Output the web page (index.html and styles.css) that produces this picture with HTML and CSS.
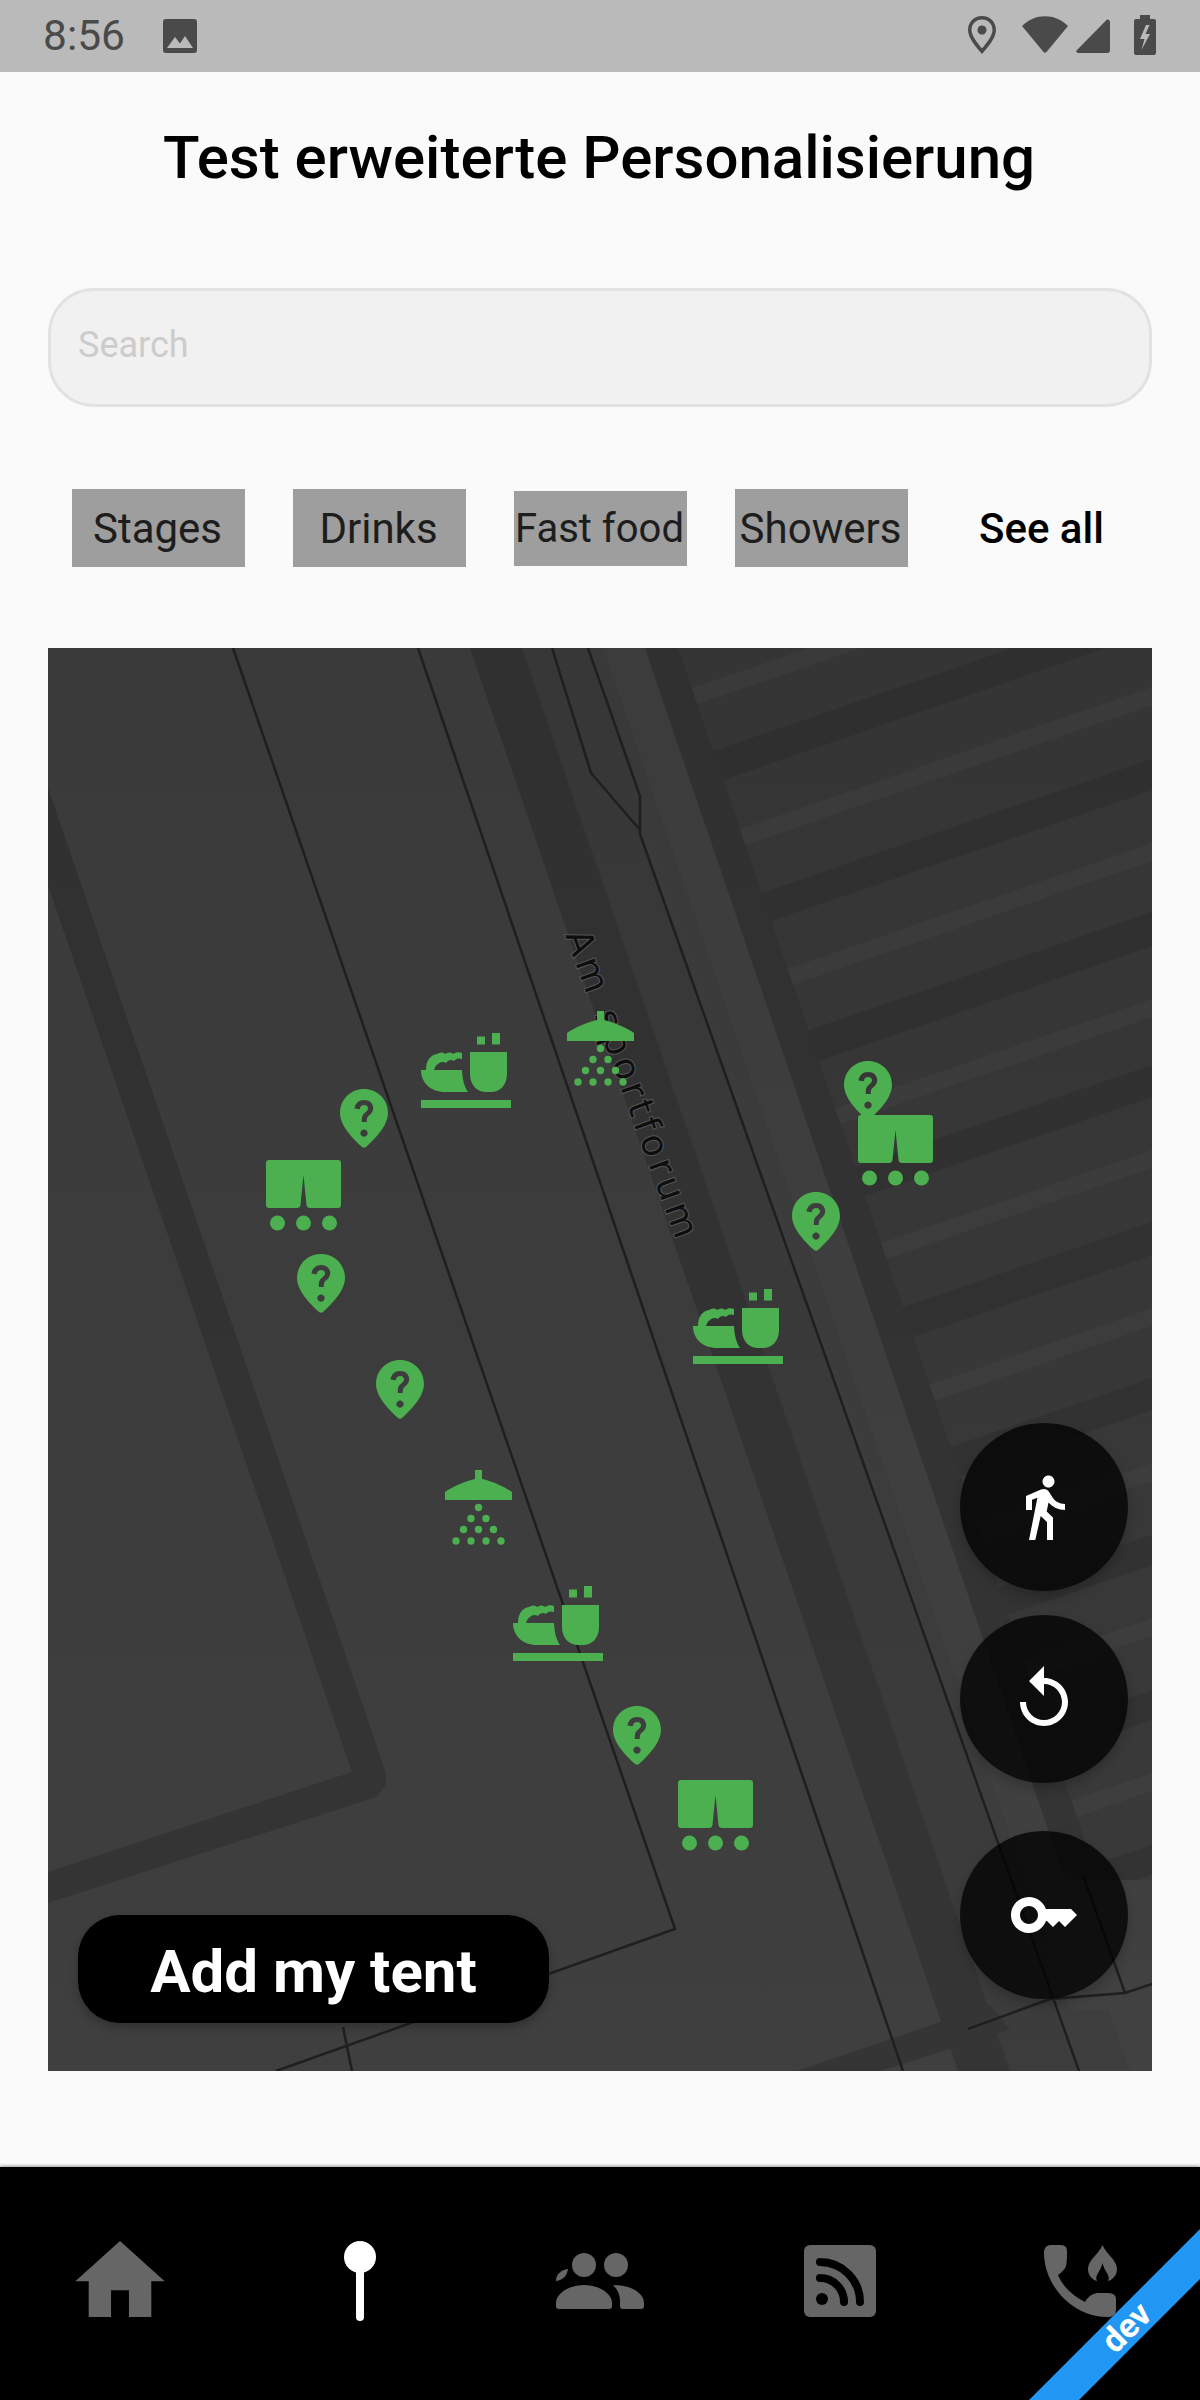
FILE: index.html
```html
<!DOCTYPE html>
<html lang="de">
<head>
<meta charset="utf-8">
<title>Test erweiterte Personalisierung</title>
<link rel="stylesheet" href="styles.css">
</head>
<body>
<svg class="defs" width="0" height="0" aria-hidden="true">
  <defs>
    <linearGradient id="fade" x1="0" y1="0" x2="0" y2="1">
      <stop offset="0" stop-color="#fff" stop-opacity="0"/>
      <stop offset="1" stop-color="#fff" stop-opacity=".025"/>
    </linearGradient>
    <symbol id="pin" viewBox="0 0 48 59">
      <path fill="#4caf50" fill-rule="evenodd" d="M24 0C37 0 48 10 48 24C48 36 36 49 26 58Q24 59.500 22 58C12 49 0 36 0 24C0 10 11 0 24 0ZM24 40.500a3.600 3.600 0 1 0 .01 0ZM14.500 19.500l5.200 0.800C20 17.500 21.800 16 24.200 16C26.500 16 28 17.400 28 19.300C28 21 27 22 25.500 23.200C23 25.200 21.800 27 21.800 30.500V33h5v-2C26.800 28.500 28 27.400 29.500 26.100C31.600 24.300 33.200 22.500 33.200 19.100C33.200 14.500 29.500 11 24.100 11C19 11 15.200 14.400 14.500 19.500Z"/>
    </symbol>
    <symbol id="shorts" viewBox="0 0 75 71">
      <path fill="#4caf50" d="M3 0H72Q75 0 75 3V45Q75 48 72 48H44Q41 48 40.500 45L37.500 15L34.500 45Q34 48 31 48H3Q0 48 0 45V3Q0 0 3 0Z"/>
      <circle cx="11.500" cy="63" r="7.500" fill="#4caf50"/>
      <circle cx="37.500" cy="63" r="7.500" fill="#4caf50"/>
      <circle cx="63.500" cy="63" r="7.500" fill="#4caf50"/>
    </symbol>
    <symbol id="bowl" viewBox="0 0 90 75">
      <g fill="#4caf50">
        <path d="M56 3.500H64V11.500H56ZM71 0H79V11.500H71Z"/>
        <path d="M49 19H86V41C86 52 79 59 70 59H65C56 59 49 52 49 41Z"/>
        <path d="M0 67H90V75H0Z"/>
        <path d="M0 37H41C41.500 46 43 53 47 59H24C10 59 0 50 0 37Z"/>
        <path d="M5 37C5 28 9 22 16 21C19 19 22 19 24 21C27 19 30 19 32 21C35 19 38 19 41 20V26C38 25 35 25 33 28C30 26 27 27 25 30C22 28 19 29 17 31C15 32 14 34 13 37Z"/>
      </g>
    </symbol>
    <symbol id="shower" viewBox="0 0 67 75">
      <path fill="#4caf50" d="M30 0H37V9C47 11 60 17 67 22V30H0V22C7 17 20 11 30 9Z"/>
      <g fill="#4caf50">
        <circle cx="33.500" cy="37.500" r="3.700"/>
        <circle cx="26" cy="48.500" r="3.700"/>
        <circle cx="41" cy="48.500" r="3.700"/>
        <circle cx="18.500" cy="59.500" r="3.700"/>
        <circle cx="33.500" cy="59.500" r="3.700"/>
        <circle cx="48.500" cy="59.500" r="3.700"/>
        <circle cx="11" cy="71" r="3.700"/>
        <circle cx="26" cy="71" r="3.700"/>
        <circle cx="41" cy="71" r="3.700"/>
        <circle cx="56" cy="71" r="3.700"/>
      </g>
    </symbol>
  </defs>
</svg>

<div class="screen">
  <header class="status">
    <div class="status-left">
      <span class="clock">8:56</span>
      <svg class="st-img" viewBox="0 0 34 34" aria-hidden="true"><path fill="#4a4a4a" d="M3 0H31Q34 0 34 3V31Q34 34 31 34H3Q0 34 0 31V3Q0 0 3 0Z"/><path fill="#bababa" d="M4 29L12 18L17 24.500L22 17L30 29Z"/></svg>
    </div>
    <div class="status-right">
      <svg class="st-loc" viewBox="0 0 28 38" aria-hidden="true"><path fill="#4a4a4a" fill-rule="evenodd" d="M14 0C22 0 28 6 28 14C28 22 20 31 14 38C8 31 0 22 0 14C0 6 6 0 14 0ZM14 3.500C8 3.500 3.500 8 3.500 14C3.500 19.500 9 26.500 14 32.500C19 26.500 24.500 19.500 24.500 14C24.500 8 20 3.500 14 3.500ZM14 9.500a4.500 4.500 0 1 1 -.01 0Z"/></svg>
      <svg class="st-wifi" viewBox="0 0 46 37" aria-hidden="true"><path fill="#4a4a4a" d="M0 10C13 -3 33 -3 46 10L24.500 36Q23 37.500 21.500 36Z"/></svg>
      <svg class="st-signal" viewBox="0 0 34 34" aria-hidden="true"><path fill="#4a4a4a" d="M31 0.500Q34 0 34 3V31Q34 34 31 34H2Q-1 33 1 31Z"/></svg>
      <svg class="st-batt" viewBox="0 0 22 40" aria-hidden="true"><path fill="#4a4a4a" d="M6 0H16V4H20Q22 4 22 6V38Q22 40 20 40H2Q0 40 0 38V6Q0 4 2 4H6Z"/><path fill="#bababa" d="M12 10L6 24H10.500L7.500 35L16 19H11.500L15.500 10Z"/></svg>
    </div>
  </header>

  <main class="content">
    <h1 class="title">Test erweiterte Personalisierung</h1>
    <div class="search"><span class="placeholder">Search</span></div>
    <nav class="filters">
      <span class="chip">Stages</span>
      <span class="chip">Drinks</span>
      <span class="chip chip-fit">Fast food</span>
      <span class="chip">Showers</span>
      <span class="see-all">See all</span>
    </nav>

    <section class="map">
      <svg class="map-canvas" viewBox="48 648 1104 1423" aria-label="Karte">
        <rect x="48" y="648" width="1104" height="1423" fill="#3a3a3a"/>
        <polygon fill="#373737" points="522,648 588,648 640,796 640,834 1079,2071 1010,2071"/>
        <polygon fill="#353535" points="645,648 1152,648 1152,2071 1130,2071"/>
        <polygon fill="#393939" points="588,648 645,648 1130,2071 1079,2071"/>
        <polygon fill="#3c3c3c" points="603,648 645,648 1110,2010 1070,2010"/>
        <polygon fill="#303030" points="470,648 522,648 1010,2071 958,2071"/>
        <polygon fill="#3a3a3a" points="692,688 1152,530 1152,548 692,706"/>
        <polygon fill="#3a3a3a" points="740,829 1152,687 1152,705 740,847"/>
        <polygon fill="#3a3a3a" points="787,969 1152,843 1152,861 787,987"/>
        <polygon fill="#3a3a3a" points="835,1108 1152,999 1152,1017 835,1126"/>
        <polygon fill="#3a3a3a" points="881,1243 1152,1150 1152,1168 881,1261"/>
        <polygon fill="#3a3a3a" points="929,1385 1152,1308 1152,1326 929,1403"/>
        <polygon fill="#3a3a3a" points="976,1524 1152,1463 1152,1481 976,1542"/>
        <polygon fill="#3a3a3a" points="1024,1662 1152,1618 1152,1636 1024,1680"/>
        <polygon fill="#3a3a3a" points="1071,1801 1152,1773 1152,1791 1071,1819"/>
        <polygon fill="#2f2f2f" points="708,753 1152,600 1152,632 708,785"/>
        <polygon fill="#2f2f2f" points="756,895 1152,759 1152,790 756,926"/>
        <polygon fill="#2f2f2f" points="804,1032 1152,912 1152,946 804,1066"/>
        <polygon fill="#2f2f2f" points="850,1169 1152,1065 1152,1097 850,1201"/>
        <polygon fill="#2f2f2f" points="898,1309 1152,1222 1152,1255 898,1342"/>
        <polygon fill="#2f2f2f" points="945,1449 1152,1378 1152,1410 945,1481"/>
        <polygon fill="#2f2f2f" points="993,1590 1152,1535 1152,1565 993,1620"/>
        <polygon fill="#2f2f2f" points="1040,1729 1152,1690 1152,1720 1040,1759"/>
        <polygon fill="#2f2f2f" points="1087,1867 1152,1845 1152,1875 1087,1897"/>
        <polygon fill="#303030" points="645,648 678,648 1095,1870 1062,1870"/>
        <polygon fill="#3c3c3c" points="1062,1880 1152,1880 1152,2071 1130,2071"/>
        <polygon fill="#303030" points="48,788 386,1773 386,1785 376,1797 48,1903 48,1872 352,1772 48,885"/>
        <polygon fill="#303030" points="797,2071 990,2005 1010,2030 880,2071"/>
        <rect x="48" y="648" width="1104" height="1423" fill="url(#fade)"/>
        <g fill="none" stroke="#1f1f1f" stroke-width="2.500">
          <path d="M233 648L675 1929L276 2071"/>
          <path d="M343 2027L352 2071"/>
          <path d="M418 648L903 2071"/>
          <path d="M552 648L591 773L640 830"/>
          <path d="M588 648L640 796V834L1079 2071"/>
          <path d="M968 2029L1050 1999L1125 1993L1152 1984"/>
          <path d="M1083 1875L1125 1993"/>
        </g>
        <text class="street" transform="translate(565 935) rotate(70)">Am sportforum</text>
        <use href="#pin" x="340" y="1089" width="48" height="59"/>
        <use href="#pin" x="297" y="1254" width="48" height="59"/>
        <use href="#pin" x="376" y="1360" width="48" height="59"/>
        <use href="#pin" x="844" y="1061" width="48" height="59"/>
        <use href="#pin" x="792" y="1192" width="48" height="59"/>
        <use href="#pin" x="613" y="1706" width="48" height="59"/>
        <use href="#shorts" x="266" y="1160" width="75" height="71"/>
        <use href="#shorts" x="858" y="1115" width="75" height="71"/>
        <use href="#shorts" x="678" y="1780" width="75" height="71"/>
        <use href="#bowl" x="421" y="1033" width="90" height="75"/>
        <use href="#bowl" x="693" y="1289" width="90" height="75"/>
        <use href="#bowl" x="513" y="1586" width="90" height="75"/>
        <use href="#shower" x="567" y="1011" width="67" height="75"/>
        <use href="#shower" x="445" y="1470" width="67" height="75"/>
      </svg>

      <div class="fab fab-walk"><svg viewBox="0 0 24 24" aria-hidden="true"><path fill="#fff" d="M13.500 5.500c1.100 0 2-.9 2-2s-.9-2-2-2-2 .9-2 2 .9 2 2 2zM9.800 8.900L7 23h2.100l1.800-8 2.100 2v6h2v-7.500l-2.100-2 .6-3C14.800 12 16.800 13 19 13v-2c-1.900 0-3.500-1-4.300-2.400l-1-1.600c-.4-.6-1-1-1.700-1-.3 0-.5.100-.8.100L6 8.300V13h2V9.600l1.800-.7"/></svg></div>
      <div class="fab fab-undo"><svg viewBox="0 0 24 24" aria-hidden="true"><path fill="#fff" d="M12 5V1L7 6l5 5V7c3.300 0 6 2.700 6 6s-2.700 6-6 6-6-2.700-6-6H4c0 4.400 3.600 8 8 8s8-3.600 8-8-3.600-8-8-8z"/></svg></div>
      <div class="fab fab-key"><svg viewBox="0 0 24 24" aria-hidden="true"><path fill="#fff" d="M21 10h-8.350C11.830 7.670 9.610 6 7 6c-3.310 0-6 2.690-6 6s2.690 6 6 6c2.610 0 4.830-1.670 5.650-4H13l2 2 2-2 2 2 4-4.040L21 10zM7 15c-1.650 0-3-1.350-3-3s1.350-3 3-3 3 1.350 3 3-1.350 3-3 3z"/></svg></div>
      <div class="add-tent">Add my tent</div>
    </section>
  </main>

  <footer class="tabbar">
    <svg class="tab tab-home" viewBox="2 3 20 17" aria-hidden="true"><path fill="#666" d="M10 20v-6h4v6h5v-8h3L12 3 2 12h3v8z"/></svg>
    <svg class="tab tab-pin" viewBox="0 0 32 80" aria-hidden="true"><circle cx="16" cy="16" r="16" fill="#fff"/><rect x="12" y="20" width="8" height="60" rx="4" fill="#fff"/></svg>
    <svg class="tab tab-people" viewBox="0 0 88 56" aria-hidden="true">
      <g fill="#666">
        <circle cx="28" cy="12" r="12"/>
        <circle cx="60" cy="12" r="12"/>
        <path d="M12 16C11 22 8 27 0 28C0 22 4 17 12 16Z"/>
        <path d="M0 50C0 40 14 32 28 32C42 32 56 40 56 50V53Q56 56 53 56H3Q0 56 0 53Z"/>
        <path d="M57 32C75 32 88 40 88 50V53Q88 56 85 56H67Q64 56 64 53V48C64 42 62 37 57 32Z"/>
      </g>
    </svg>
    <svg class="tab tab-rss" viewBox="0 0 72 72" aria-hidden="true">
      <rect width="72" height="72" rx="6" fill="#666"/>
      <g fill="none" stroke="#000" stroke-width="8" stroke-linecap="round"><path d="M16 33A24 24 0 0 1 40 57"/><path d="M16 17A40 40 0 0 1 56 57"/></g>
      <circle cx="18" cy="54" r="6" fill="#000"/>
    </svg>
    <svg class="tab tab-phone" viewBox="0 0 76 72" aria-hidden="true">
      <path fill="#666" d="M7 0H17Q23 0 23 6C23 12 23 17 22 21Q21 25 14 30C19 42 29 51 41 57C45 50 50 48 55 48H64Q72 48 72 54V64Q72 72 64 72C28 72 0 40 0 8Q0 0 7 0Z"/>
      <path fill="#666" d="M58.500 0C62 9 73 15 73 24C73 31 68 35 64 36C65.500 33 64.500 31 63 28C61 25 59.500 22 58.500 18C57.500 22 56 25 54 28C52.500 31 51.500 33 53 36C49 35 44 31 44 24C44 15 55 9 58.500 0Z"/>
    </svg>
  </footer>

  <svg class="ribbon" viewBox="0 0 171 171" aria-hidden="true">
    <polygon fill="#2196f3" points="171,0 0,171 50,171 171,50"/>
    <text class="ribbon-text" transform="translate(97 98) rotate(-45)" text-anchor="middle" y="12">dev</text>
  </svg>
</div>
</body>
</html>
```
FILE: styles.css
```css
* { box-sizing: border-box; }
html, body { margin: 0; padding: 0; }
body { width: 1200px; height: 2400px; background: #fafafa; font-family: Roboto, "Liberation Sans", sans-serif; overflow: hidden; }
.defs { position: absolute; }
.screen { position: relative; width: 1200px; height: 2400px; display: flex; flex-direction: column; }

.status { height: 72px; flex: none; background: #bababa; display: flex; align-items: center; justify-content: space-between; padding: 0 44px 0 43px; }
.status-left { display: flex; align-items: center; gap: 38px; }
.clock { font-size: 42.500px; color: #4a4a4a; line-height: 1; }
.st-img { width: 34px; height: 34px; }
.status-right { display: flex; align-items: center; margin-bottom: 3px; }
.st-loc { width: 28px; height: 38px; margin-right: 26px; }
.st-wifi { width: 46px; height: 37px; margin-right: 8px; }
.st-signal { width: 34px; height: 34px; margin-right: 24px; margin-top: 3px; }
.st-batt { width: 22px; height: 40px; }

.content { flex: 1; padding: 0 48px; display: flex; flex-direction: column; }
.title { margin: 48px 0 0; padding-right: 2px; height: 76px; font-size: 60px; line-height: 76px; font-weight: 500; color: #000; text-align: center; white-space: nowrap; }
.search { margin: 92px 0 0; height: 119px; border: 3px solid #e2e2e2; border-radius: 46px; background: #f1f1f1; display: flex; align-items: center; padding: 0 0 5px 27px; }
.placeholder { font-size: 36px; color: #ccc; }
.filters { margin-top: 82px; height: 78px; display: flex; align-items: center; padding-left: 24px; }
.chip { width: 173px; height: 78px; margin-right: 48px; padding-right: 2px; background: #9e9e9e; color: #1d1d1d; font-size: 42px; display: flex; align-items: center; justify-content: center; white-space: nowrap; flex: none; }
.chip-fit { height: 75px; padding-right: 2px; font-size: 40px; }
.see-all { margin-left: 23px; font-size: 42px; font-weight: 500; color: #000; white-space: nowrap; }

.map { position: relative; margin-top: 81px; width: 1104px; height: 1423px; overflow: hidden; background: #3c3c3c; }
.map-canvas { display: block; width: 1104px; height: 1423px; }
.street { font-family: "DejaVu Sans", sans-serif; font-size: 36px; letter-spacing: 4.500px; fill: #0e0e0e; stroke: #565656; stroke-width: 2px; paint-order: stroke; }

.fab { position: absolute; left: 912px; width: 168px; height: 168px; border-radius: 50%; background: rgba(0,0,0,.76); box-shadow: 0 6px 12px rgba(0,0,0,.2); display: flex; align-items: center; justify-content: center; }
.fab svg { width: 72px; height: 72px; }
.fab-walk { top: 775px; }
.fab-undo { top: 967px; }
.fab-key { top: 1183px; }
.add-tent { position: absolute; left: 30px; top: 1267px; width: 471px; height: 108px; padding-top: 5px; border-radius: 42px; background: #000; color: #fff; font-size: 60px; font-weight: 700; display: flex; align-items: center; justify-content: center; box-shadow: 0 4px 10px rgba(0,0,0,.25); white-space: nowrap; }

.tabbar { position: relative; height: 233px; flex: none; background: #000; box-shadow: 0 -1px 3px rgba(0,0,0,.4); display: block; }
.tab { position: absolute; display: block; }
.tab-home { left: 75px; top: 74px; width: 90px; height: 76px; }
.tab-pin { left: 344px; top: 74px; width: 32px; height: 80px; }
.tab-people { left: 556px; top: 86px; width: 88px; height: 56px; }
.tab-rss { left: 804px; top: 78px; width: 72px; height: 72px; }
.tab-phone { left: 1044px; top: 78px; width: 76px; height: 72px; }

.ribbon { position: absolute; right: 0; bottom: 0; width: 171px; height: 171px; }
.ribbon-text { font-family: Roboto, sans-serif; font-size: 34px; font-weight: 700; fill: #fff; }
```
